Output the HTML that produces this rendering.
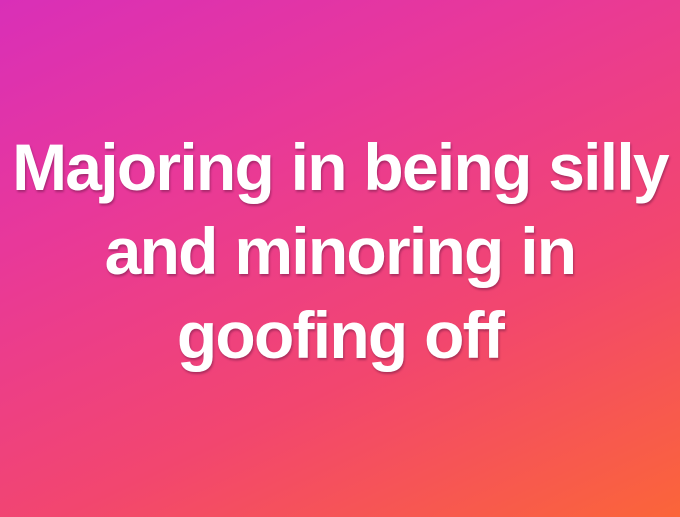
<!DOCTYPE html>
<html><head><style>
html,body{margin:0;padding:0}
body{width:680px;height:517px;overflow:hidden;position:relative;
background:linear-gradient(155deg,#d92fb8 0%,#e8389a 30%,#f2466f 65%,#fb6539 100%);}
.t{position:absolute;left:0;top:125px;width:680px;text-align:center;color:#fff;
font-family:"Liberation Sans",sans-serif;font-weight:bold;font-size:66px;line-height:84px;letter-spacing:-1.75px;word-spacing:1px;
text-shadow:1px 2px 2px rgba(90,20,60,0.45);}
</style></head><body>
<div class="t">Majoring in being silly<br>and minoring in<br>goofing off</div>
</body></html>
